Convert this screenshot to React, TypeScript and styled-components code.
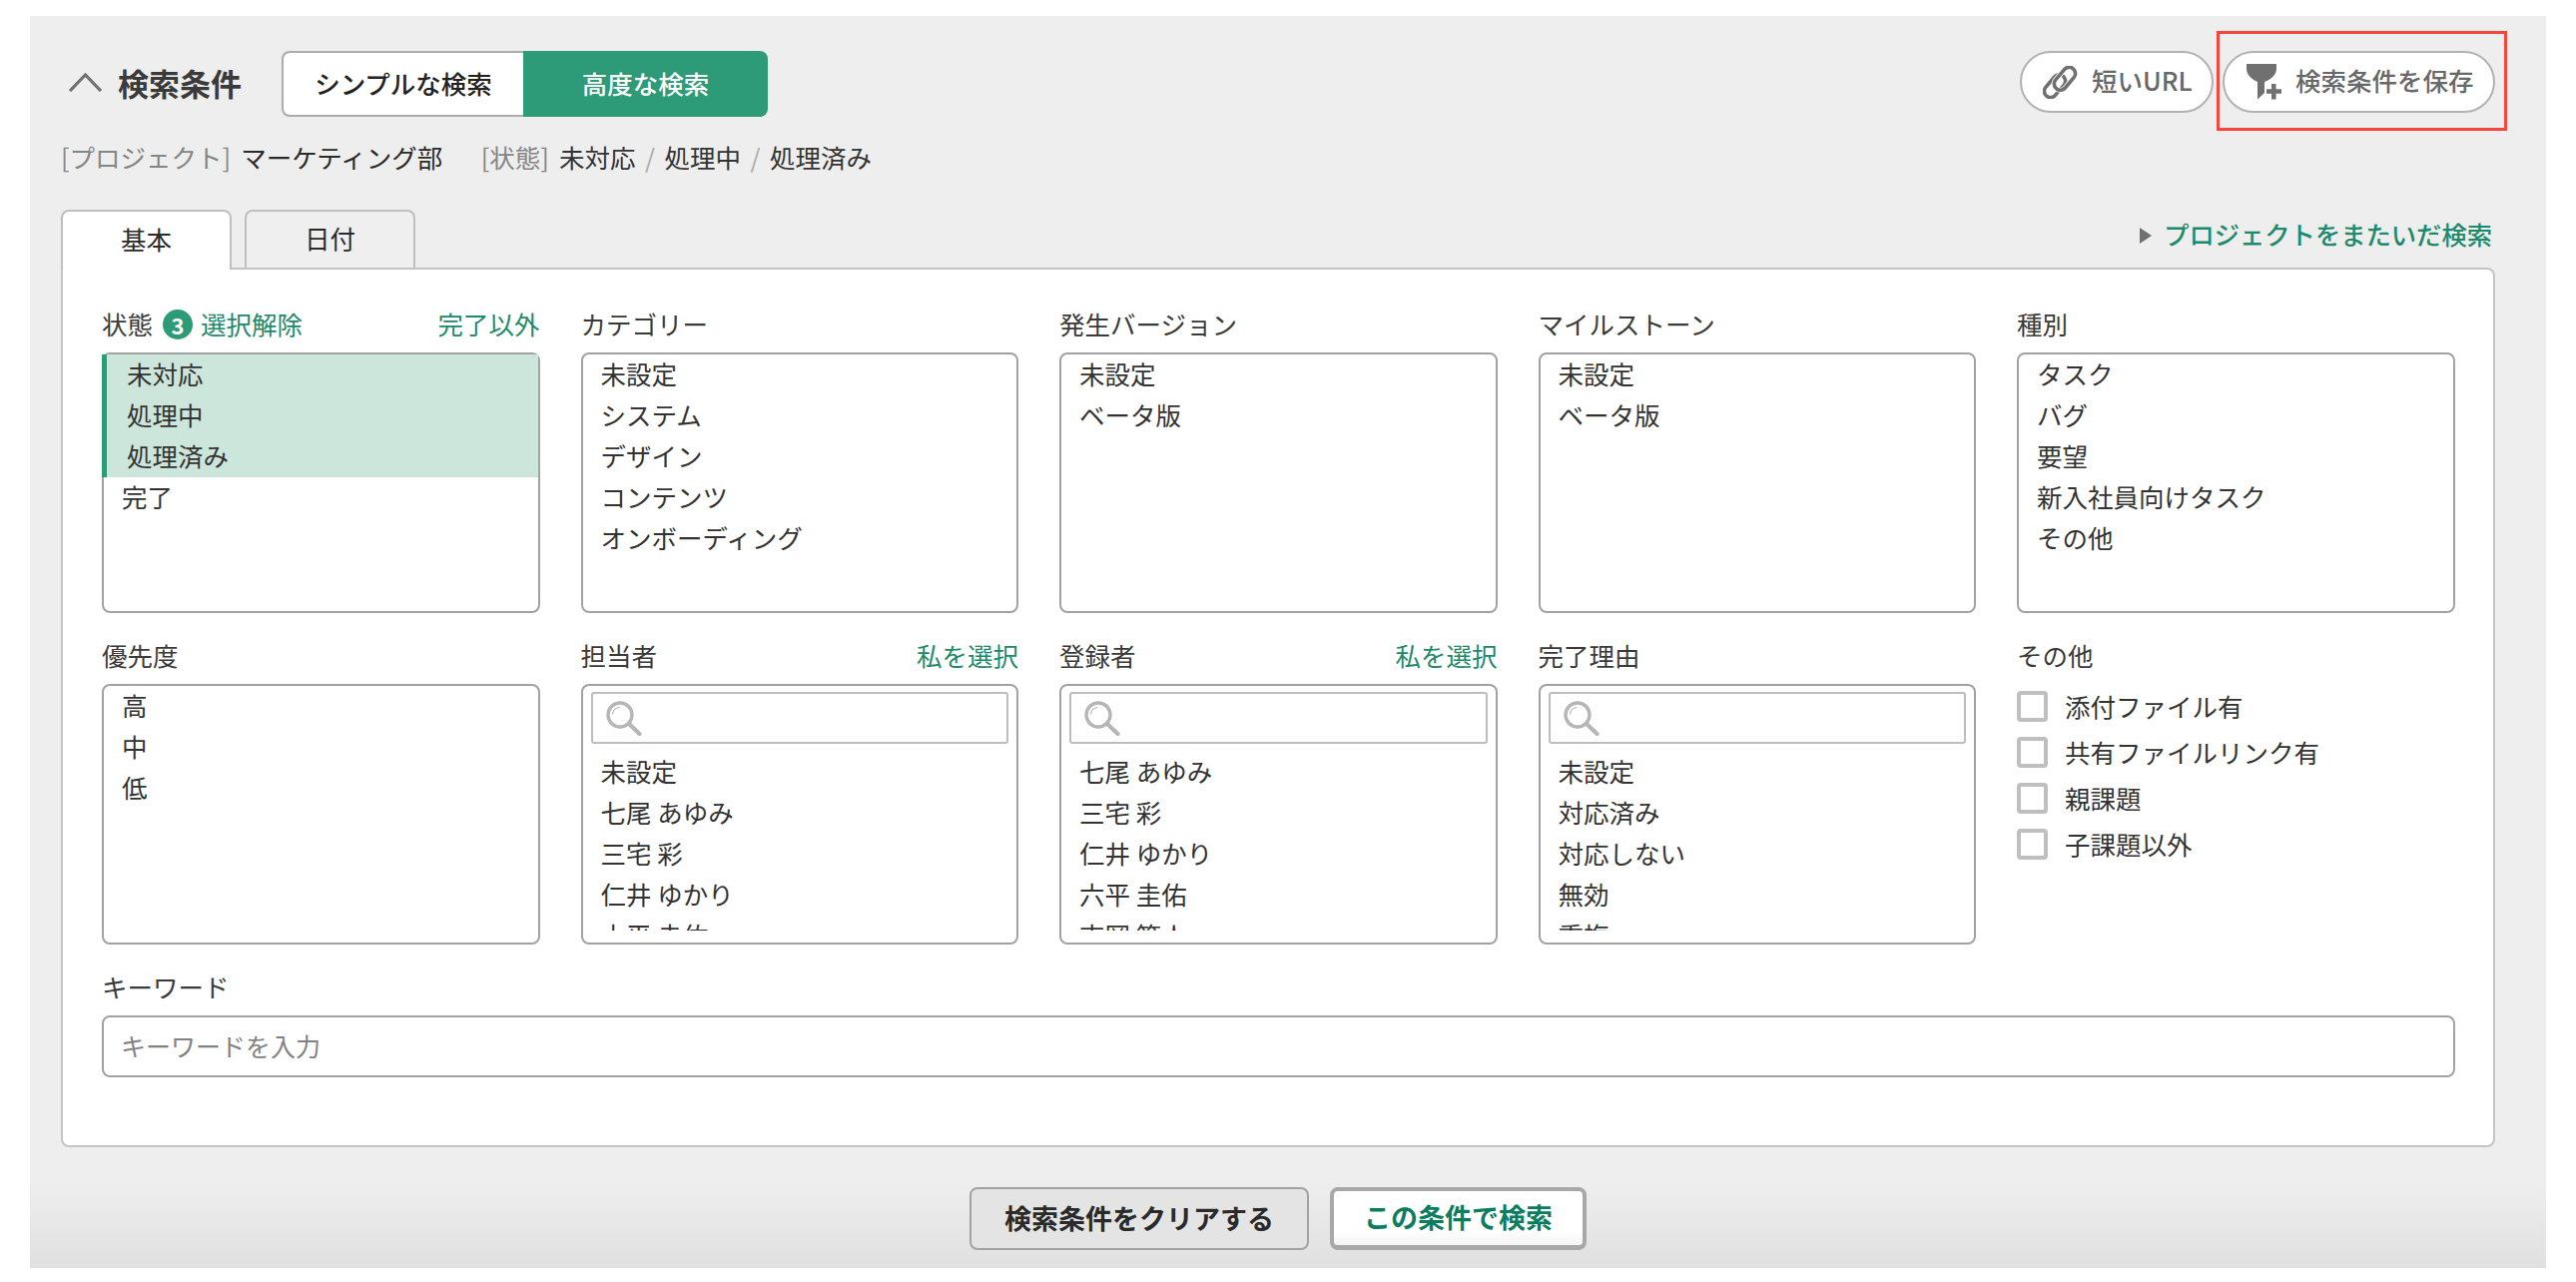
import React from "react";
import styled, { createGlobalStyle } from "styled-components";

const GREEN = "#2d9b78";
const LINK = "#1d8a6c";
const TEXT = "#333333";
const ICON = "#707070";

const Global = createGlobalStyle`
  html, body { margin: 0; padding: 0; background: #fff; }
  body { font-family: "Noto Sans CJK JP", "Noto Sans", sans-serif; color: ${TEXT}; font-size: 25.5px; }
  * { box-sizing: border-box; }
`;

const Page = styled.div`
  width: 2580px;
  height: 1284px;
  padding: 16px 30px 14px;
`;
const Panel = styled.section`
  height: 1254px;
  padding: 35px 51px 0 31px;
  background: linear-gradient(to bottom, #eeeeee 0, #eeeeee 1170px, #e0e0e0 1254px);
`;
const Header = styled.header`
  display: flex;
  align-items: flex-start;
  height: 66px;
`;
const Chevron = styled.svg`
  width: 35px;
  height: 19px;
  margin: 22px 15px 0 7px;
  flex: none;
`;
const Title = styled.h2`
  margin: 0 40px 0 0;
  font-size: 31px;
  font-weight: 700;
  line-height: 63px;
  color: #3a3a3a;
`;
const Segmented = styled.div`
  display: flex;
  height: 66px;
`;
const Segment = styled.div<{ $active?: boolean }>`
  height: 66px;
  width: ${(p) => (p.$active ? "245px" : "242px")};
  padding-bottom: 3px;
  display: flex;
  align-items: center;
  justify-content: center;
  font-weight: 500;
  border-radius: ${(p) => (p.$active ? "0 8px 8px 0" : "8px 0 0 8px")};
  background: ${(p) => (p.$active ? GREEN : "#fff")};
  color: ${(p) => (p.$active ? "#fff" : "#222")};
  border: ${(p) => (p.$active ? "none" : "2px solid #acacac")};
  border-right: none;
`;
const HeaderActions = styled.div`
  margin-left: auto;
  display: flex;
  gap: 9px;
`;
const Pill = styled.button<{ $w: number }>`
  position: relative;
  width: ${(p) => p.$w}px;
  height: 62px;
  display: flex;
  align-items: center;
  gap: 14px;
  padding: 0 0 0 21px;
  font: 500 25.5px "Noto Sans CJK JP", sans-serif;
  color: #686868;
  background: #fff;
  border: 2px solid #b2b2b2;
  border-radius: 31px;
`;
const PillLabel = styled.span`
  margin-top: -5px;
`;
const Highlight = styled.span`
  position: absolute;
  left: -8px;
  top: -22px;
  width: 291px;
  height: 100px;
  border: 3px solid #f5463c;
  pointer-events: none;
`;
const Summary = styled.div`
  display: flex;
  align-items: center;
  height: 40px;
  margin-top: 19px;
`;
const SummaryKey = styled.span`
  color: #858585;
  margin-right: 10px;
`;
const SummaryVal = styled.span`
  color: #2a2a2a;
  margin-right: 38.5px;
`;
const Sep = styled.span`
  color: #aaa;
  margin: 0 9.5px;
`;
const TabRow = styled.div`
  display: flex;
  align-items: flex-end;
  height: 60px;
  margin-top: 34px;
  gap: 13px;
  position: relative;
  z-index: 1;
`;
const Tab = styled.div<{ $active?: boolean }>`
  width: 171px;
  height: ${(p) => (p.$active ? "60px" : "58px")};
  align-self: flex-start;
  padding-bottom: 6px;
  display: flex;
  align-items: center;
  justify-content: center;
  border: 2px solid #bfbfbf;
  border-bottom: none;
  border-radius: 8px 8px 0 0;
  background: ${(p) => (p.$active ? "#fff" : "#efefef")};
  color: #2a2a2a;
`;
const CrossLink = styled.a`
  margin-left: auto;
  align-self: flex-start;
  height: 48px;
  display: flex;
  align-items: center;
  gap: 12px;
  padding-right: 3px;
  color: ${LINK};
  font-size: 25.3px;
  font-weight: 500;
`;
const Triangle = styled.span`
  width: 0;
  height: 0;
  margin-top: 4px;
  border-left: 12px solid ${ICON};
  border-top: 8px solid transparent;
  border-bottom: 8px solid transparent;
`;
const Body = styled.div`
  height: 881px;
  margin-top: -2px;
  padding: 35px 38.5px 0 39px;
  background: #fff;
  border: 2px solid #c4c4c4;
  border-radius: 0 8px 8px 8px;
`;
const Grid = styled.div`
  display: grid;
  grid-template-columns: repeat(5, 1fr);
  column-gap: 41px;
  row-gap: 23px;
`;
const LabelRow = styled.div`
  display: flex;
  align-items: center;
  height: 40px;
  padding-bottom: 3px;
  margin-bottom: 8px;
`;
const Label = styled.span`
  color: #3a3a3a;
`;
const Badge = styled.span`
  width: 30px;
  height: 30px;
  margin: 3px 8px 0 10px;
  border-radius: 50%;
  background: ${GREEN};
  color: #fff;
  font-size: 22px;
  font-weight: 700;
  display: flex;
  align-items: center;
  justify-content: center;
`;
const Action = styled.a<{ $right?: boolean }>`
  color: ${LINK};
  ${(p) => (p.$right ? "margin-left: auto;" : "")}
`;
const ListBox = styled.div`
  height: 261px;
  background: #fff;
  border: 2px solid #a2a2a2;
  border-radius: 8px;
`;
const Option = styled.div<{ $selected?: boolean }>`
  height: 41px;
  line-height: 38px;
  white-space: nowrap;
  padding-left: 18px;
  color: #333;
  ${(p) =>
    p.$selected
      ? `margin: 0 0 0 -2px; padding-left: 20px; background: #cde6dc; border-left: 5px solid ${GREEN};`
      : ""}
`;
const SearchBox = styled.div`
  display: flex;
  align-items: center;
  height: 52px;
  margin: 6px 8px 8px;
  padding-left: 13px;
  border: 2px solid #bdbdbd;
  border-radius: 3px;
`;
const ClippedList = styled.div`
  height: 179px;
  overflow: hidden;
`;
const CheckList = styled.div`
  display: flex;
  flex-direction: column;
  gap: 15px;
  margin-top: 15px;
`;
const CheckRow = styled.label`
  display: flex;
  align-items: center;
  gap: 17px;
  height: 31px;
  color: #333;
`;
const CheckText = styled.span`
  margin-top: -3px;
`;
const Check = styled.span`
  width: 31px;
  height: 31px;
  flex: none;
  background: #fff;
  border: 4px solid #bfbfbf;
  border-radius: 4px;
`;
const KeywordBlock = styled.div`
  margin-top: 23px;
`;
const KeywordInput = styled.input`
  display: block;
  width: 100%;
  height: 62px;
  padding: 0 17px 3px;
  font: 400 25px "Noto Sans CJK JP", sans-serif;
  color: #333;
  background: #fff;
  border: 2px solid #a2a2a2;
  border-radius: 8px;
  &::placeholder { color: #828282; opacity: 1; }
`;
const Footer = styled.div`
  display: flex;
  justify-content: center;
  gap: 21px;
  margin-top: 40px;
`;
const ClearButton = styled.button`
  width: 340px;
  height: 63px;
  padding-bottom: 4px;
  font: 700 27px "Noto Sans CJK JP", sans-serif;
  color: #2a2a2a;
  background: #e4e4e4;
  border: 2px solid #a2a2a2;
  border-radius: 8px;
`;
const SearchButton = styled.button`
  width: 257px;
  height: 63px;
  padding-bottom: 4px;
  font: 700 27px "Noto Sans CJK JP", sans-serif;
  color: #0d7d60;
  background: linear-gradient(#fff 70%, #f5f5f5);
  border: 4px solid #a8a8a8;
  border-bottom-width: 5px;
  border-radius: 8px;
`;

const LinkIcon = () => (
  <svg width="35" height="33" viewBox="0 0 35 33" fill="none" style={{ flex: "none" }}>
    <rect x="-1" y="14" width="26" height="12.5" rx="6.2" transform="rotate(-50 12 20.2)" stroke={ICON} strokeWidth="3.6" />
    <rect x="9" y="6.5" width="26" height="12.5" rx="6.2" transform="rotate(-50 22 12.8)" stroke="#fff" strokeWidth="5.2" />
    <rect x="9" y="6.5" width="26" height="12.5" rx="6.2" transform="rotate(-50 22 12.8)" stroke={ICON} strokeWidth="3.6" />
  </svg>
);
const FilterPlusIcon = () => (
  <svg width="36" height="36" viewBox="0 0 36 36" style={{ flex: "none" }}>
    <path d="M1 0H31V5C31 11 25 16 19 18V29L12 35.5V18C7 16 1 11 1 5Z" fill={ICON} />
    <path d="M21 27.5H36M28.3 20V35.5" stroke={ICON} strokeWidth="4.5" fill="none" />
  </svg>
);
const SearchIcon = () => (
  <svg width="36" height="35" viewBox="0 0 36 35" fill="none" stroke="#b6b6b6">
    <circle cx="14" cy="14" r="12" strokeWidth="3.4" />
    <path d="M23 23L33.5 33" strokeWidth="4.2" strokeLinecap="round" />
    <path d="M6.5 13C7 9.5 9.5 7 13 6.5" strokeWidth="1.2" strokeLinecap="round" />
  </svg>
);

const Field = ({ label, action, items }: { label: string; action?: string; items: string[] }) => (
  <div>
    <LabelRow>
      <Label>{label}</Label>
      {action && <Action $right>{action}</Action>}
    </LabelRow>
    <ListBox>
      {items.map((i) => (
        <Option key={i}>{i}</Option>
      ))}
    </ListBox>
  </div>
);

const SearchField = ({ label, action, items }: { label: string; action?: string; items: string[] }) => (
  <div>
    <LabelRow>
      <Label>{label}</Label>
      {action && <Action $right>{action}</Action>}
    </LabelRow>
    <ListBox>
      <SearchBox>
        <SearchIcon />
      </SearchBox>
      <ClippedList>
        {items.map((i) => (
          <Option key={i}>{i}</Option>
        ))}
      </ClippedList>
    </ListBox>
  </div>
);

export default function App() {
  return (
    <Page>
      <Global />
      <Panel>
        <Header>
          <Chevron viewBox="0 0 35 19" fill="none" stroke={ICON} strokeWidth="3.2">
            <path d="M2 18L17.5 2L33 18" />
          </Chevron>
          <Title>検索条件</Title>
          <Segmented>
            <Segment>シンプルな検索</Segment>
            <Segment $active>高度な検索</Segment>
          </Segmented>
          <HeaderActions>
            <Pill $w={194}>
              <LinkIcon />
              <PillLabel>短いURL</PillLabel>
            </Pill>
            <Pill $w={273}>
              <FilterPlusIcon />
              <PillLabel>検索条件を保存</PillLabel>
              <Highlight />
            </Pill>
          </HeaderActions>
        </Header>
        <Summary>
          <SummaryKey>[プロジェクト]</SummaryKey>
          <SummaryVal>マーケティング部</SummaryVal>
          <SummaryKey>[状態]</SummaryKey>
          未対応<Sep>/</Sep>処理中<Sep>/</Sep>処理済み
        </Summary>
        <TabRow>
          <Tab $active>基本</Tab>
          <Tab>日付</Tab>
          <CrossLink>
            <Triangle />
            プロジェクトをまたいだ検索
          </CrossLink>
        </TabRow>
        <Body>
          <Grid>
            <div>
              <LabelRow>
                <Label>状態</Label>
                <Badge>3</Badge>
                <Action>選択解除</Action>
                <Action $right>完了以外</Action>
              </LabelRow>
              <ListBox>
                <Option $selected>未対応</Option>
                <Option $selected>処理中</Option>
                <Option $selected>処理済み</Option>
                <Option>完了</Option>
              </ListBox>
            </div>
            <Field label="カテゴリー" items={["未設定", "システム", "デザイン", "コンテンツ", "オンボーディング"]} />
            <Field label="発生バージョン" items={["未設定", "ベータ版"]} />
            <Field label="マイルストーン" items={["未設定", "ベータ版"]} />
            <Field label="種別" items={["タスク", "バグ", "要望", "新入社員向けタスク", "その他"]} />
            <Field label="優先度" items={["高", "中", "低"]} />
            <SearchField
              label="担当者"
              action="私を選択"
              items={["未設定", "七尾 あゆみ", "三宅 彩", "仁井 ゆかり", "六平 圭佑"]}
            />
            <SearchField
              label="登録者"
              action="私を選択"
              items={["七尾 あゆみ", "三宅 彩", "仁井 ゆかり", "六平 圭佑", "吉岡 篤人"]}
            />
            <SearchField label="完了理由" items={["未設定", "対応済み", "対応しない", "無効", "重複"]} />
            <div>
              <LabelRow>
                <Label>その他</Label>
              </LabelRow>
              <CheckList>
                {["添付ファイル有", "共有ファイルリンク有", "親課題", "子課題以外"].map((t) => (
                  <CheckRow key={t}>
                    <Check />
                    <CheckText>{t}</CheckText>
                  </CheckRow>
                ))}
              </CheckList>
            </div>
          </Grid>
          <KeywordBlock>
            <LabelRow>
              <Label>キーワード</Label>
            </LabelRow>
            <KeywordInput placeholder="キーワードを入力" />
          </KeywordBlock>
        </Body>
        <Footer>
          <ClearButton>検索条件をクリアする</ClearButton>
          <SearchButton>この条件で検索</SearchButton>
        </Footer>
      </Panel>
    </Page>
  );
}
